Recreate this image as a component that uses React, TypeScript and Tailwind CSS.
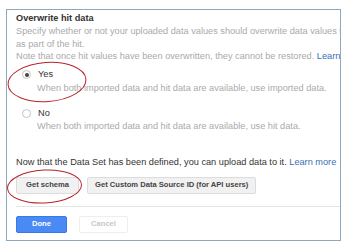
import React from "react";

function Radio({ checked }: { checked?: boolean }) {
  return (
    <span className="w-[9px] h-[9px] rounded-full border border-[#c4c4c4] bg-white flex items-center justify-center shrink-0">
      {checked && <span className="w-[4px] h-[4px] rounded-full bg-[#444]" />}
    </span>
  );
}

export default function App() {
  return (
    <div
      className="w-[347px] h-[249px] bg-white pt-[9px] pl-[6px] overflow-hidden"
      style={{ fontFamily: '"Liberation Sans", Arial, sans-serif' }}
    >
      <div className="relative w-[335px] h-[232px] border border-[#8ea8bf] overflow-hidden pl-[9px] pt-[2px] text-[9.2px] leading-[12.5px] text-[#aaaaaa]">
        <div className="font-bold text-[#333] leading-[13px] whitespace-nowrap">Overwrite hit data</div>
        <div className="whitespace-nowrap">
          <div>Specify whether or not your uploaded data values should overwrite data values that are imported</div>
          <div>as part of the hit.</div>
          <div>
            Note that once hit values have been overwritten, they cannot be restored.{" "}
            <span className="text-[#3b6fb6]">Learn more</span>
          </div>
        </div>

        <div className="mt-[5.5px] pl-[6px]">
          <div className="flex items-center gap-[7px] h-[13px] text-[#333]">
            <Radio checked />
            <span>Yes</span>
          </div>
          <div className="pl-[15px] mt-[1px] whitespace-nowrap">
            When both imported data and hit data are available, use imported data.
          </div>
          <div className="flex items-center gap-[7px] h-[13px] text-[#333] mt-[12px]">
            <Radio />
            <span>No</span>
          </div>
          <div className="pl-[15px] whitespace-nowrap">
            When both imported data and hit data are available, use hit data.
          </div>
        </div>

        <div className="mt-[23.5px] text-[#333] whitespace-nowrap">
          Now that the Data Set has been defined, you can upload data to it.{" "}
          <span className="text-[#3b6fb6]">Learn more</span>
        </div>

        <div className="flex gap-[8px] mt-[8.5px]">
          <div className="h-[17px] px-[9px] flex items-center bg-[#f1f1f1] border border-[#dcdcdc] rounded-[2px] text-[7.6px] font-bold text-[#444] whitespace-nowrap">
            Get schema
          </div>
          <div className="h-[17px] px-[7px] flex items-center bg-[#f1f1f1] border border-[#dcdcdc] rounded-[2px] text-[7.6px] font-bold text-[#444] whitespace-nowrap">
            Get Custom Data Source ID (for API users)
          </div>
        </div>

        <div className="mt-[12px] h-px bg-[#e5e5e5]" />

        <div className="flex gap-[12px] mt-[9.5px]">
          <div className="w-[51px] h-[17px] flex items-center justify-center bg-[#4a8af4] border border-[#3b78e7] rounded-[2px] text-[7.6px] font-bold text-white">
            Done
          </div>
          <div className="w-[49px] h-[17px] flex items-center justify-center bg-white border border-[#eeeeee] rounded-[2px] text-[7.6px] font-bold text-[#c8c8c8]">
            Cancel
          </div>
        </div>

        <svg className="absolute left-0 top-0 pointer-events-none" width="335" height="232">
          <ellipse cx="40" cy="72" rx="39" ry="19.5" fill="none" stroke="#b8222a" strokeWidth="1" transform="rotate(-4 40 72)" />
          <ellipse cx="37.5" cy="176.5" rx="37" ry="16.5" fill="none" stroke="#b8222a" strokeWidth="1" transform="rotate(-3 37.5 176.5)" />
        </svg>
      </div>
    </div>
  );
}
